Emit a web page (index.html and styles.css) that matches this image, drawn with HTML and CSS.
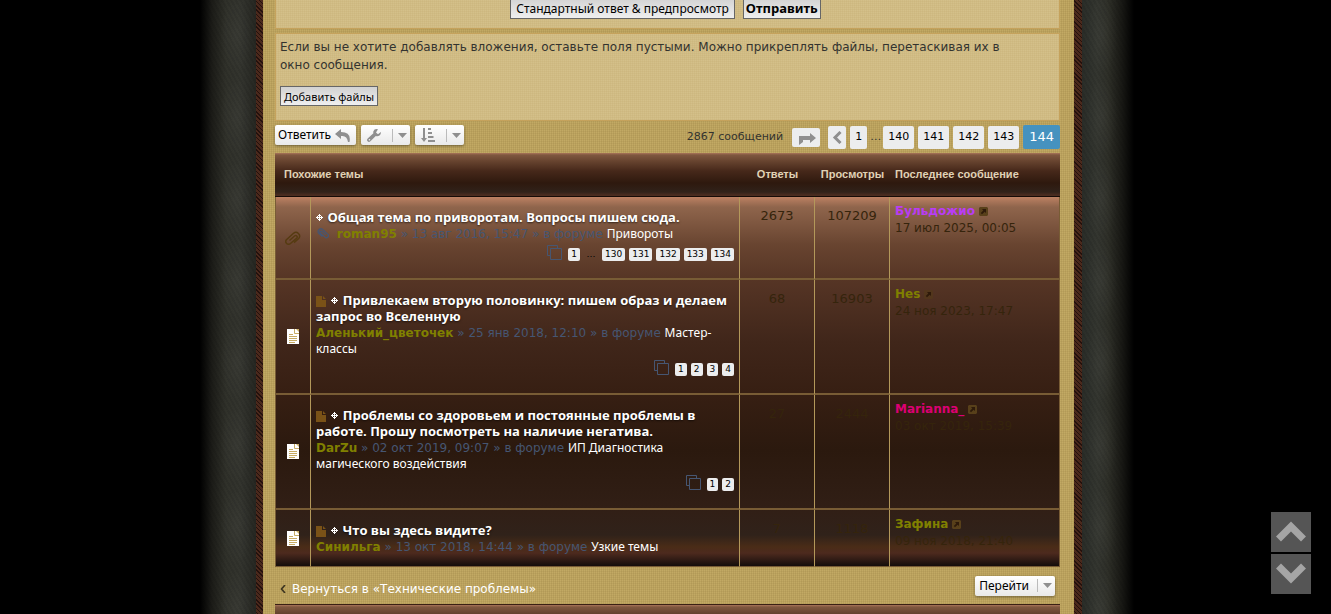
FILE: index.html
```html
<!DOCTYPE html>
<html lang="ru">
<head>
<meta charset="utf-8">
<title>Похожие темы</title>
<link rel="stylesheet" href="styles.css">
</head>
<body>
<svg class="defs" aria-hidden="true">
  <symbol id="clip" viewBox="0 0 16 16"><path d="M4.500 10.500 9.800 5.800a1.500 1.500 0 0 1 2 2.200l-6.300 5.500a2.700 2.700 0 0 1-3.800-4l6.800-6.200a3.700 3.700 0 0 1 5.200 5.200L9 12.600" fill="none" stroke="currentColor" stroke-width="1.500"/></symbol>
  <symbol id="clip-back" viewBox="0 0 16 16"><path d="M11.500 10.500 6.200 5.800a1.500 1.500 0 0 0-2 2.200l6.300 5.500a2.700 2.700 0 0 0 3.800-4L7.500 3.300a3.700 3.700 0 0 0-5.200 5.200L7 12.600" fill="none" stroke="currentColor" stroke-width="1.700"/></symbol>
  <symbol id="file" viewBox="0 0 10 11"><path d="M0 0h6v4h4v7H0z M7 0l3 3H7z" fill="currentColor"/></symbol>
  <symbol id="page" viewBox="0 0 12 15"><path d="M0 0h12v15H0z" fill="#fff"/><path d="M7.500 0v4.500H12M2 5.500h4M2 7.500h8M2 9.500h8M2 11.500h8M2 13.500h6" fill="none" stroke="#c7ab64"/><path d="M9 0h3v3z" fill="#c7ab64"/></symbol>
  <symbol id="cross" viewBox="0 0 7 7"><path d="M3 0h1v1H3zM2 1h1v1H2zM4 1h1v1H4zM1 2h1v1H1zM3 2h1v1H3zM5 2h1v1H5zM0 3h1v1H0zM2 3h3v1H2zM6 3h1v1H6zM1 4h1v1H1zM3 4h1v1H3zM5 4h1v1H5zM2 5h1v1H2zM4 5h1v1H4zM3 6h1v1H3zM3 1h1v1H3zM3 5h1v1H3zM1 3h1v1H1zM5 3h1v1H5z" fill="#fff"/></symbol>
  <symbol id="copy" viewBox="0 0 15 15"><path d="M3 10.500H.5V.5h10V3M3.500 3.500h11v11h-11z" fill="none" stroke="currentColor"/></symbol>
  <symbol id="go" viewBox="0 0 9 9"><path d="M1 0h7l1 1v7L8 9H1L0 8V1z" fill="currentColor"/><path d="M3 2h4v4L5.700 4.700 3 7.300 1.800 6.100 4.300 3.400z" fill="#2e1a0a"/></symbol>
  <symbol id="caret" viewBox="0 0 9 5"><path d="M0 0h9L4.500 5z" fill="#8f8f8f"/></symbol>
</svg>
<div class="page">
  <div class="stone stone-left"></div>
  <main class="sheet">
    <form class="panel submit">
      <button class="btn" type="button">Стандартный ответ &amp; предпросмотр</button>
      <button class="btn strong" type="button">Отправить</button>
    </form>
    <section class="panel attach">
      <p>Если вы не хотите добавлять вложения, оставьте поля пустыми. Можно прикреплять файлы, перетаскивая их в окно сообщения.</p>
      <button class="btn small" type="button">Добавить файлы</button>
    </section>
    <div class="bar">
      <div class="tools">
        <button class="tool" type="button">Ответить
          <svg width="15" height="13" viewBox="0 0 15 13"><path d="M6 0 0 5l6 5V7q6-1 7 6h1.500Q16.500 3 6 3z" fill="#8f8f8f"/></svg></button>
        <button class="tool split" type="button" aria-label="Управление темой">
          <svg width="14" height="13" viewBox="0 0 14 13"><path d="M13.800 3 11 5.200 9 3.600 11 .3Q7.500-.6 6.400 2.300q-.3 1 0 2L.7 9.600Q-.6 11 .6 12.300 2 13.500 3.400 12.200L8.800 7q2 .7 3.700-.5 1.700-1.500 1.300-3.500zM2.500 10a.8.8 0 1 1-.1 1.600.8.8 0 0 1 .1-1.600z" fill="#8f8f8f"/></svg>
          <span class="drop"><svg width="9" height="5"><use href="#caret"/></svg></span></button>
        <button class="tool split" type="button" aria-label="Сортировка">
          <svg width="14" height="14" viewBox="0 0 14 14"><path d="M2 0v10H0l3 4 3-4H4V0zM7 0h3v2H7zM7 4h4v2H7zM7 8h5.500v2H7zM7 12h7v2H7z" fill="#8f8f8f"/></svg>
          <span class="drop"><svg width="9" height="5"><use href="#caret"/></svg></span></button>
      </div>
      <nav class="pages" aria-label="Страницы">
        <span class="total">2867 сообщений</span>
        <a class="jump" href="#" aria-label="Перейти на страницу"><svg width="17" height="12" viewBox="0 0 17 12"><path d="M0 12V3h11V0l6 5-6 5V7H4v2z" fill="#8f8f8f"/></svg></a>
        <a class="prev" href="#" aria-label="Пред."><svg width="10" height="13" viewBox="0 0 10 13"><path d="M8.500 1 3 6.500 8.500 12" fill="none" stroke="#8f8f8f" stroke-width="3"/></svg></a>
        <a href="#">1</a><span class="dots">…</span><a href="#">140</a><a href="#">141</a><a href="#">142</a><a href="#">143</a><strong>144</strong>
      </nav>
    </div>
    <table class="topics">
      <colgroup><col class="c-icon"><col><col class="c-num"><col class="c-num"><col class="c-last"></colgroup>
      <thead>
        <tr><th colspan="2">Похожие темы</th><th class="n">Ответы</th><th class="n">Просмотры</th><th class="l">Последнее сообщение</th></tr>
      </thead>
      <tbody>
        <tr>
          <td class="icon"><svg class="dim" width="16" height="16"><use href="#clip"/></svg></td>
          <td class="topic"><h3><svg class="x" width="7" height="7"><use href="#cross"/></svg> <a href="#">Общая тема по приворотам. Вопросы пишем сюда.</a></h3>
            <p><svg class="mini" width="12" height="12"><use href="#clip-back"/></svg> <b>roman95</b> » 13 авг 2016, 15:47 » в форуме <a href="#">Привороты</a></p>
            <div class="sub"><svg width="15" height="15"><use href="#copy"/></svg><a href="#">1</a><span class="dots">…</span><a href="#">130</a><a href="#">131</a><a href="#">132</a><a href="#">133</a><a href="#">134</a></div></td>
          <td class="num">2673</td><td class="num">107209</td>
          <td class="last"><b class="violet">Бульдожио</b> <svg width="9" height="9"><use href="#go"/></svg><br>17 июл 2025, 00:05</td>
        </tr>
        <tr>
          <td class="icon"><svg width="12" height="15"><use href="#page"/></svg></td>
          <td class="topic"><h3><svg class="f" width="10" height="11"><use href="#file"/></svg> <svg class="x" width="7" height="7"><use href="#cross"/></svg> <a href="#">Привлекаем вторую половинку: пишем образ и делаем запрос во Вселенную</a></h3>
            <p><b>Аленький_цветочек</b> » 25 янв 2018, 12:10 » в форуме <a href="#">Мастер-<wbr>классы</a></p>
            <div class="sub"><svg width="15" height="15"><use href="#copy"/></svg><a href="#">1</a><a href="#">2</a><a href="#">3</a><a href="#">4</a></div></td>
          <td class="num">68</td><td class="num">16903</td>
          <td class="last"><b>Hes</b> <svg class="faint" width="9" height="9"><use href="#go"/></svg><br>24 ноя 2023, 17:47</td>
        </tr>
        <tr>
          <td class="icon"><svg width="12" height="15"><use href="#page"/></svg></td>
          <td class="topic"><h3><svg class="f" width="10" height="11"><use href="#file"/></svg> <svg class="x" width="7" height="7"><use href="#cross"/></svg> <a href="#">Проблемы со здоровьем и постоянные проблемы в работе. Прошу посмотреть на наличие негатива.</a></h3>
            <p><b>DarZu</b> » 02 окт 2019, 09:07 » в форуме <a href="#">ИП Диагностика магического воздействия</a></p>
            <div class="sub"><svg width="15" height="15"><use href="#copy"/></svg><a href="#">1</a><a href="#">2</a></div></td>
          <td class="num">27</td><td class="num">2444</td>
          <td class="last"><b class="pink">Marianna_</b> <svg width="9" height="9"><use href="#go"/></svg><br>03 окт 2019, 15:39</td>
        </tr>
        <tr>
          <td class="icon"><svg width="12" height="15"><use href="#page"/></svg></td>
          <td class="topic"><h3><svg class="f" width="10" height="11"><use href="#file"/></svg> <svg class="x" width="7" height="7"><use href="#cross"/></svg> <a href="#">Что вы здесь видите?</a></h3>
            <p><b>Синильга</b> » 13 окт 2018, 14:44 » в форуме <a href="#">Узкие темы</a></p></td>
          <td class="num">7</td><td class="num">1118</td>
          <td class="last"><b>Зафина</b> <svg width="9" height="9"><use href="#go"/></svg><br>09 ноя 2018, 21:40</td>
        </tr>
      </tbody>
    </table>
    <div class="back">
      <a href="#"><svg width="6" height="8" viewBox="0 0 6 8"><path d="M5 0 1.500 4 5 8" fill="none" stroke="#3c3420" stroke-width="1.600"/></svg>Вернуться в «Технические проблемы»</a>
      <button class="tool split" type="button">Перейти <span class="drop"><svg width="9" height="5"><use href="#caret"/></svg></span></button>
    </div>
    <div class="next"></div>
  </main>
  <div class="stone stone-right"></div>
</div>
<div class="scroll">
  <button type="button" aria-label="Вверх"><svg width="30" height="21" viewBox="0 0 30 21"><path d="M2.500 18 15 5.500 27.500 18" fill="none" stroke="#a5a5a5" stroke-width="7"/></svg></button>
  <button type="button" aria-label="Вниз"><svg width="30" height="21" viewBox="0 0 30 21"><path d="M2.500 3 15 15.500 27.500 3" fill="none" stroke="#a5a5a5" stroke-width="7"/></svg></button>
</div>
</body>
</html>
```
FILE: styles.css
```css
* { box-sizing: border-box; }
body {
  margin: 0;
  padding-left: 7px;
  height: 100vh;
  overflow: hidden;
  background: #000;
  color: #33332f;
  font: 13px/18px "DejaVu Sans", Verdana, sans-serif;
}
.defs { display: none; }
a { color: #fff; text-decoration: none; }
button { font-family: inherit; color: #000; margin: 0; }
p, h3 { margin: 0; }

.page { display: grid; grid-template-columns: 1fr 826px 1fr; min-height: 100vh; }
.stone-left { background: radial-gradient(ellipse 16px 38px at 30px 35px, #ffffff08, #0000) right top / 50px 82px repeat-y, repeating-linear-gradient(60deg, #0000 0 2px, #00000014 2px 4px), linear-gradient(to left, #262722, #33342e 15px, #30312a 30px, #1c1c18 44px, #000 56px); }
.stone-right { background: radial-gradient(ellipse 16px 38px at 20px 35px, #ffffff08, #0000) left top / 50px 82px repeat-y, repeating-linear-gradient(60deg, #0000 0 2px, #00000014 2px 4px), linear-gradient(to right, #2a2d28, #343630 15px, #2e2f28 26px, #181814 40px, #000 52px); }

.sheet {
  padding: 0 14px 0 12px;
  border: solid transparent;
  border-width: 0 8px 0 7px;
  background:
    repeating-linear-gradient(0deg, #8d753822 0 1px, #0000 1px 2px) padding-box,
    repeating-linear-gradient(90deg, #8d753830 0 1px, #0000 1px 2px) padding-box,
    linear-gradient(#c2a964, #c2a964) padding-box,
    repeating-linear-gradient(45deg, #24110d 0 1px, #4b291c 1px 3px) border-box;
}

.panel {
  border: 1px solid #c5a25c;
  background:
    repeating-linear-gradient(0deg, #b79d5c22 0 1px, #0000 1px 2px),
    repeating-linear-gradient(90deg, #b79d5c22 0 1px, #0000 1px 2px),
    #d4c08a;
}
.submit { display: flex; justify-content: center; gap: 8px; height: 30px; margin-top: -1px; padding-right: 4px; }
.btn { border: 1px solid #666; background: linear-gradient(#d2d2d2, #efefef); padding: 0 5px; font-size: 12px; line-height: 17px; font-family: "Noto Sans", sans-serif; }
.submit .btn { height: 22px; margin-top: -3px; }
.btn.strong { padding: 0 2px; font-size: 13px; font-weight: bold; }
.attach { margin-top: 4px; padding: 4px 4px 12px; min-height: 88px; }
.attach p { padding-right: 24px; font-size: 12px; }
.btn.small { display: block; margin-top: 12px; padding: 0 3px; height: 20px; font-size: 11px; }

.bar { display: flex; justify-content: space-between; align-items: flex-start; height: 32px; padding-top: 4px; }
.tools { display: flex; gap: 5px; }
.tool {
  display: flex; align-items: center; gap: 4px;
  height: 20px; padding: 0 6px 0 3px;
  border: 0; border-radius: 2px;
  background: linear-gradient(#fff, #e9e9e9);
  box-shadow: 0 1px 3px #0006;
  font: 12px/20px "Noto Sans", sans-serif;
}
.split { padding: 0 3px 0 4px; gap: 8px; }
.tools .split { padding-left: 6px; gap: 11px; }
.drop { display: flex; align-items: center; height: 13px; padding-left: 5px; border-left: 1px solid #bbb; }
.pages { display: flex; align-items: center; gap: 4px; font-size: 11px; height: 24px; }
.pages a, .pages strong { display: flex; align-items: center; height: 23px; padding: 0 5px; border-radius: 2px; background: #ecedee; color: #000; }
.pages strong { height: 24px; padding: 0 6px; background: #4692bf; color: #fff; font-size: 13px; font-weight: normal; }
.pages .jump { height: 19px; padding: 4px 4px 0 7px; margin: 0 4px 0 5px; }
.pages .prev { padding: 0 4px; }
.pages .dots { width: 10px; margin: 0 -1px; text-align: center; }

.topics { width: 100%; table-layout: fixed; border-collapse: separate; border-spacing: 0; }
.c-icon { width: 36px; }
.c-num { width: 75px; }
.c-last { width: 170px; }
.topics th {
  height: 44px; padding: 0 0 2px 9px;
  text-align: left; color: #e0d2b6;
  font: bold 11px "Liberation Sans", Arial, sans-serif;
  border-bottom: 1px solid #140b07;
}
.topics th.n { text-align: center; padding-left: 0; }
.topics th.l { padding-left: 5px; }
.topics thead { background: linear-gradient(#a9745a, #7f573f 2px, #64412d 9px, #46281a 18px, #2e190e 30px, #30221a 39px, #4a2c20 42px); }
.topics tbody { background: linear-gradient(#bd8163, #8f654c 10px, #684430 48px, #563525 82px, #40261a 145px, #371f13 195px, #2b190e 253px, #311f16 315px, #30221a 338px, #4a2c17 350px, #4d2a1e 356px, #100b0a 370px); }
.topics td { vertical-align: top; padding: 0; border-right: 1px solid #b3985a; border-bottom: 2px solid #785c35; color: #3a260f; }
.topics td:first-child { border-left: 1px solid #785c35; }
.topics td:last-child { border-right-color: #785c35; }
.topics tr:last-child td { border-bottom-width: 1px; }
.topics td.icon { vertical-align: middle; text-align: center; }
.icon svg { display: block; margin: 0 auto; }
.icon .dim { color: #563b11; }
.topics td.topic { padding: 12px 5px 17px; line-height: 16px; color: #465672; }
.topics tr:last-child td.topic { padding-bottom: 11px; }
.topic h3 { margin-bottom: 1px; font: bold 13px/16px "Open Sans", "Trebuchet MS", sans-serif; color: #fff; text-shadow: 0 1px 2px #0009; }
.topic h3 .f { color: #7a5217; margin-right: 2px; vertical-align: -2px; }
.topic h3 .x { margin-right: 1px; vertical-align: 1px; }
.topic p { font-size: 12px; }
.topic p a { font-family: "Noto Sans", sans-serif; }
.mini { vertical-align: -1px; margin: 0 4px 0 1px; }
b { color: #808000; }
.sub { display: flex; justify-content: flex-end; align-items: center; gap: 4px; margin-top: 6px; height: 13px; font-size: 9px; line-height: 13px; color: #000; }
.sub svg { margin: 0 2px 4px 0; color: #465672; }
.sub a { padding: 0 3px; border-radius: 2px; background: #ecedee; color: #000; }
.sub .dots { width: 14px; text-align: center; }
.topics td.num { padding: 10px 0 0; text-align: center; line-height: 17px; color: #35240c; }
.topics td.last { padding: 6px 0 0 5px; font-size: 12px; line-height: 17px; color: #35240c; }
.last svg { color: #58401a; vertical-align: -1px; }
.last svg.faint { color: #52361c; }
.violet { color: #b93cf5; }
.pink { color: #dc0073; }

.back { display: flex; justify-content: space-between; align-items: center; height: 37px; padding: 0 5px; }
.back a { display: flex; align-items: center; gap: 6px; font-size: 12px; padding-top: 6px; }
.next { height: 30px; border-top: 1px solid #3a2014; background: linear-gradient(#a9745a, #7f573f 2px, #64412d 9px); }

.scroll { position: fixed; right: 20px; bottom: 20px; display: grid; gap: 2px; }
.scroll button { display: flex; align-items: center; justify-content: center; width: 40px; height: 40px; padding: 0 0 2px; border: 0; background: #555; }
```
